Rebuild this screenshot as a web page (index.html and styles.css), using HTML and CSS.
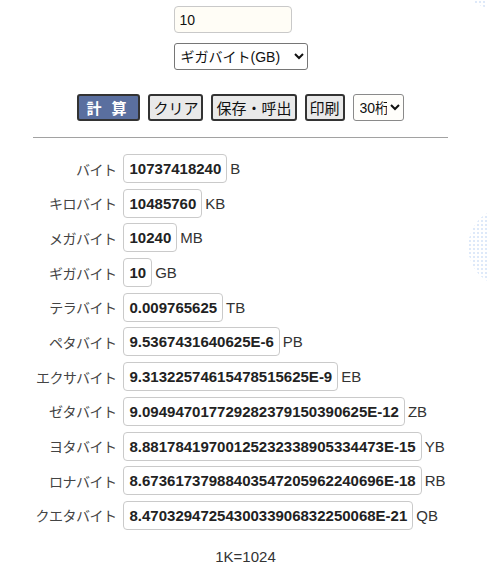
FILE: index.html
```html
<!DOCTYPE html>
<html lang="ja">
<head>
  <meta charset="UTF-8" />
  <meta name="viewport" content="width=device-width, initial-scale=1.0"/>
  <title>バイト換算</title>
  <link rel="stylesheet" href="styles.css">
</head>
<body>
  <div class="dots dots-top"></div>
  <div class="dots dots-mid"></div>

  <div id="page">
    <div class="input-block">
      <input class="num-input" type="text" value="10">
      <select class="unit-select">
        <option>バイト(B)</option>
        <option>キロバイト(KB)</option>
        <option>メガバイト(MB)</option>
        <option selected>ギガバイト(GB)</option>
        <option>テラバイト(TB)</option>
      </select>
    </div>

    <div class="button-row">
      <button class="btn btn-calc">計算</button>
      <button class="btn">クリア</button>
      <button class="btn">保存・呼出</button>
      <button class="btn">印刷</button>
      <select class="digits-select">
        <option selected>30桁</option>
        <option>50桁</option>
      </select>
    </div>

    <hr class="divider">

    <div class="results">
      <div class="label">バイト</div>
      <div class="cell"><span class="val">10737418240</span><span class="unit">B</span></div>

      <div class="label">キロバイト</div>
      <div class="cell"><span class="val">10485760</span><span class="unit">KB</span></div>

      <div class="label">メガバイト</div>
      <div class="cell"><span class="val">10240</span><span class="unit">MB</span></div>

      <div class="label">ギガバイト</div>
      <div class="cell"><span class="val">10</span><span class="unit">GB</span></div>

      <div class="label">テラバイト</div>
      <div class="cell"><span class="val">0.009765625</span><span class="unit">TB</span></div>

      <div class="label">ペタバイト</div>
      <div class="cell"><span class="val">9.5367431640625E-6</span><span class="unit">PB</span></div>

      <div class="label">エクサバイト</div>
      <div class="cell"><span class="val">9.31322574615478515625E-9</span><span class="unit">EB</span></div>

      <div class="label">ゼタバイト</div>
      <div class="cell"><span class="val">9.094947017729282379150390625E-12</span><span class="unit">ZB</span></div>

      <div class="label">ヨタバイト</div>
      <div class="cell"><span class="val">8.88178419700125232338905334473E-15</span><span class="unit">YB</span></div>

      <div class="label">ロナバイト</div>
      <div class="cell"><span class="val">8.67361737988403547205962240696E-18</span><span class="unit">RB</span></div>

      <div class="label">クエタバイト</div>
      <div class="cell"><span class="val">8.4703294725430033906832250068E-21</span><span class="unit">QB</span></div>
    </div>

    <p class="note">1K=1024</p>
  </div>
</body>
</html>
```

FILE: styles.css
```css
body {
  font-family: "Liberation Sans", "Noto Sans CJK JP", sans-serif;
  color: #333;
  background: #fff;
  margin: 0;
  padding-top: 6px;
  position: relative;
  overflow: hidden;
  min-height: 568px;
}

#page {
  width: 481px;
  position: relative;
}

/* 入力欄 */
.input-block {
  display: flex;
  flex-direction: column;
  align-items: flex-start;
  gap: 10px;
  width: 134px;
  margin: 0 auto;
}

.num-input {
  box-sizing: border-box;
  width: 118px;
  height: 27px;
  padding: 0 5px;
  border: 1px solid #c9c9c9;
  border-radius: 4px;
  background: #fffdf6;
  font-family: "Liberation Sans", sans-serif;
  font-size: 14px;
  color: #111;
}

.unit-select,
.digits-select {
  box-sizing: border-box;
  height: 27px;
  border: 1px solid #767676;
  border-radius: 3px;
  background: #fff;
  font-family: "Liberation Sans", "Noto Sans CJK JP", sans-serif;
  font-size: 14px;
  color: #111;
}

.unit-select {
  width: 134px;
  padding-left: 2px;
}

/* ボタン */
.button-row {
  display: flex;
  justify-content: center;
  align-items: center;
  gap: 8px;
  margin-top: 24px;
}

.btn {
  box-sizing: border-box;
  height: 27px;
  padding: 0 3px;
  border: 2px solid #333;
  border-radius: 3px;
  background: #e9e9e9;
  font-family: "Noto Sans CJK JP", sans-serif;
  font-size: 15px;
  line-height: 21px;
  color: #111;
  cursor: pointer;
}

.btn-calc {
  width: 63px;
  padding: 0 0 0 7px;
  letter-spacing: 10px;
  background: #5a6f9f;
  color: #fff;
  font-weight: bold;
  text-align: left;
}

.digits-select {
  width: 51px;
  padding-left: 2px;
  background: #fffefb;
  border-color: #8a8a8a;
}

.divider {
  width: 415px;
  margin: 16px auto 0;
  border: 0;
  border-top: 1px solid #a2a2a2;
}

/* 結果 */
.results {
  display: grid;
  grid-template-columns: auto auto;
  justify-content: center;
  align-items: center;
  column-gap: 6px;
  row-gap: 5.7px;
  margin-top: 16px;
}

.label {
  text-align: right;
  font-family: "Noto Sans CJK JP", sans-serif;
  font-size: 14px;
  letter-spacing: -0.5px;
  color: #444;
}

.cell {
  display: flex;
  align-items: center;
  gap: 3px;
}

.val {
  box-sizing: border-box;
  height: 29px;
  line-height: 27px;
  padding: 0 5px 0 6px;
  border: 1px solid #cacaca;
  border-radius: 4px;
  font-size: 15px;
  font-weight: bold;
  color: #222;
}

.unit {
  font-size: 15px;
  color: #333;
}

.note {
  margin: 18px 0 0;
  padding-left: 10px;
  text-align: center;
  font-size: 15px;
  color: #333;
}

/* 背景の水玉（画面端で切れた円） */
.dots {
  position: absolute;
  background-image: radial-gradient(circle, #c9dcf6 0.9px, transparent 1.3px);
  background-size: 4px 4px;
  opacity: 0.6;
}

.dots-top {
  width: 25px;
  height: 8px;
  left: 462px;
  top: 0;
  -webkit-mask-image: radial-gradient(circle 30px at 30px -22px, #000 99%, transparent 100%);
  mask-image: radial-gradient(circle 30px at 30px -22px, #000 99%, transparent 100%);
}

.dots-mid {
  width: 19px;
  height: 80px;
  left: 468px;
  top: 207px;
  -webkit-mask-image: radial-gradient(circle 40px at 40px 40px, #000 99%, transparent 100%);
  mask-image: radial-gradient(circle 40px at 40px 40px, #000 99%, transparent 100%);
}
```
